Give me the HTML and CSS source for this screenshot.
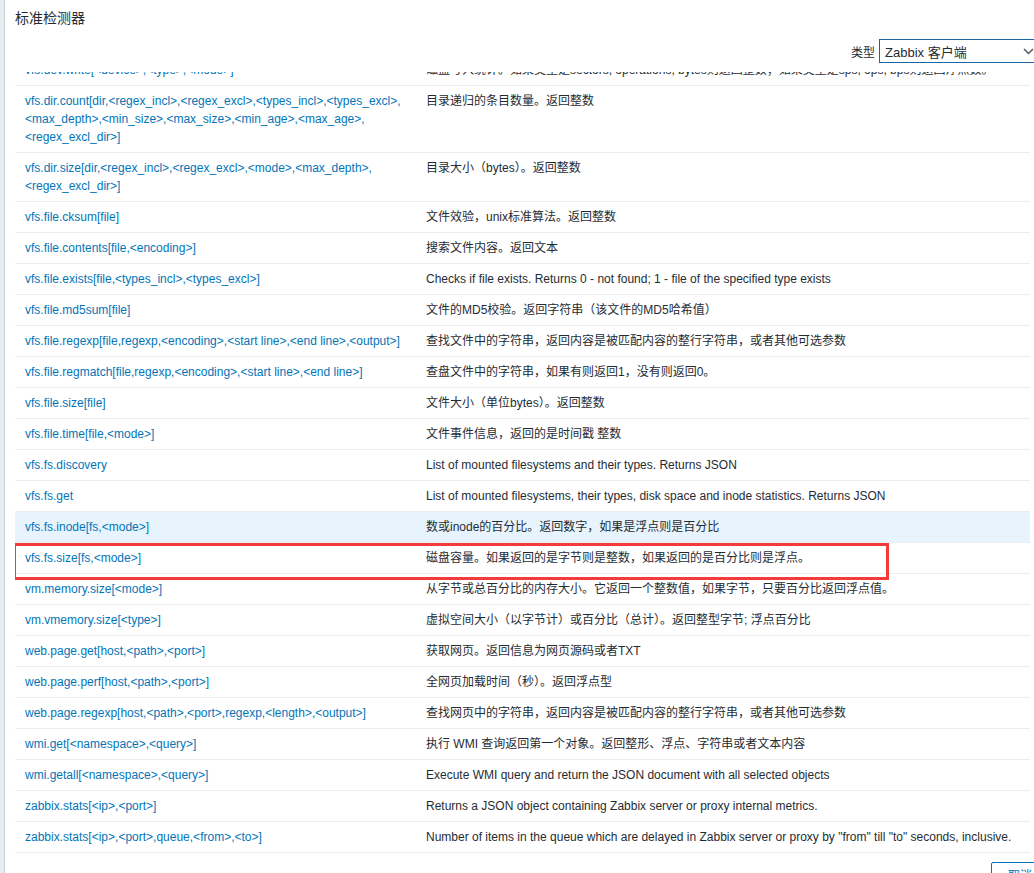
FILE: index.html
```html
<!DOCTYPE html>
<html lang="zh">
<head>
<meta charset="utf-8">
<title>标准检测器</title>
<link rel="stylesheet" href="styles.css">
</head>
<body>
<div class="backdrop-strip"></div>
<div class="dialog">
  <div class="dialog-header"><h4>标准检测器</h4></div>
  <div class="filter-row">
    <span class="filter-label">类型</span>
    <div class="select">
      <span>Zabbix 客户端</span>
      <svg width="11" height="7" viewBox="0 0 11 7"><path d="M1 1l4.5 4.5L10 1" fill="none" stroke="#4f5b63" stroke-width="1.5"/></svg>
    </div>
  </div>
  <div class="table-wrap">
    <table class="items">
      <tbody>
        <tr><td class="key"><a>vfs.dev.write[&lt;device&gt;,&lt;type&gt;,&lt;mode&gt;]</a></td><td>磁盘写入统计。如果类型是sectors, operations, bytes则返回整数；如果类型是sps, ops, bps则返回浮点数。</td></tr>
        <tr><td class="key"><a>vfs.dir.count[dir,<wbr>&lt;regex_incl&gt;,<wbr>&lt;regex_excl&gt;,<wbr>&lt;types_incl&gt;,<wbr>&lt;types_excl&gt;,<wbr>&lt;max_depth&gt;,<wbr>&lt;min_size&gt;,<wbr>&lt;max_size&gt;,<wbr>&lt;min_age&gt;,<wbr>&lt;max_age&gt;,<wbr>&lt;regex_excl_dir&gt;]</a></td><td>目录递归的条目数量。返回整数</td></tr>
        <tr><td class="key"><a>vfs.dir.size[dir,<wbr>&lt;regex_incl&gt;,<wbr>&lt;regex_excl&gt;,<wbr>&lt;mode&gt;,<wbr>&lt;max_depth&gt;,<wbr>&lt;regex_excl_dir&gt;]</a></td><td>目录大小（bytes）。返回整数</td></tr>
        <tr><td class="key"><a>vfs.file.cksum[file]</a></td><td>文件效验，unix标准算法。返回整数</td></tr>
        <tr><td class="key"><a>vfs.file.contents[file,&lt;encoding&gt;]</a></td><td>搜索文件内容。返回文本</td></tr>
        <tr><td class="key"><a>vfs.file.exists[file,&lt;types_incl&gt;,&lt;types_excl&gt;]</a></td><td>Checks if file exists. Returns 0 - not found; 1 - file of the specified type exists</td></tr>
        <tr><td class="key"><a>vfs.file.md5sum[file]</a></td><td>文件的MD5校验。返回字符串（该文件的MD5哈希值）</td></tr>
        <tr><td class="key"><a>vfs.file.regexp[file,regexp,&lt;encoding&gt;,&lt;start line&gt;,&lt;end line&gt;,&lt;output&gt;]</a></td><td>查找文件中的字符串，返回内容是被匹配内容的整行字符串，或者其他可选参数</td></tr>
        <tr><td class="key"><a>vfs.file.regmatch[file,regexp,&lt;encoding&gt;,&lt;start line&gt;,&lt;end line&gt;]</a></td><td>查盘文件中的字符串，如果有则返回1，没有则返回0。</td></tr>
        <tr><td class="key"><a>vfs.file.size[file]</a></td><td>文件大小（单位bytes）。返回整数</td></tr>
        <tr><td class="key"><a>vfs.file.time[file,&lt;mode&gt;]</a></td><td>文件事件信息，返回的是时间戳 整数</td></tr>
        <tr><td class="key"><a>vfs.fs.discovery</a></td><td>List of mounted filesystems and their types. Returns JSON</td></tr>
        <tr><td class="key"><a>vfs.fs.get</a></td><td>List of mounted filesystems, their types, disk space and inode statistics. Returns JSON</td></tr>
        <tr class="hover"><td class="key"><a>vfs.fs.inode[fs,&lt;mode&gt;]</a></td><td>数或inode的百分比。返回数字，如果是浮点则是百分比</td></tr>
        <tr><td class="key"><a>vfs.fs.size[fs,&lt;mode&gt;]</a></td><td>磁盘容量。如果返回的是字节则是整数，如果返回的是百分比则是浮点。</td></tr>
        <tr><td class="key"><a>vm.memory.size[&lt;mode&gt;]</a></td><td>从字节或总百分比的内存大小。它返回一个整数值，如果字节，只要百分比返回浮点值。</td></tr>
        <tr><td class="key"><a>vm.vmemory.size[&lt;type&gt;]</a></td><td>虚拟空间大小（以字节计）或百分比（总计）。返回整型字节; 浮点百分比</td></tr>
        <tr><td class="key"><a>web.page.get[host,&lt;path&gt;,&lt;port&gt;]</a></td><td>获取网页。返回信息为网页源码或者TXT</td></tr>
        <tr><td class="key"><a>web.page.perf[host,&lt;path&gt;,&lt;port&gt;]</a></td><td>全网页加载时间（秒）。返回浮点型</td></tr>
        <tr><td class="key"><a>web.page.regexp[host,&lt;path&gt;,&lt;port&gt;,regexp,&lt;length&gt;,&lt;output&gt;]</a></td><td>查找网页中的字符串，返回内容是被匹配内容的整行字符串，或者其他可选参数</td></tr>
        <tr><td class="key"><a>wmi.get[&lt;namespace&gt;,&lt;query&gt;]</a></td><td>执行 WMI 查询返回第一个对象。返回整形、浮点、字符串或者文本内容</td></tr>
        <tr><td class="key"><a>wmi.getall[&lt;namespace&gt;,&lt;query&gt;]</a></td><td>Execute WMI query and return the JSON document with all selected objects</td></tr>
        <tr><td class="key"><a>zabbix.stats[&lt;ip&gt;,&lt;port&gt;]</a></td><td>Returns a JSON object containing Zabbix server or proxy internal metrics.</td></tr>
        <tr><td class="key"><a>zabbix.stats[&lt;ip&gt;,&lt;port&gt;,queue,&lt;from&gt;,&lt;to&gt;]</a></td><td>Number of items in the queue which are delayed in Zabbix server or proxy by "from" till "to" seconds, inclusive.</td></tr>
      </tbody>
    </table>
    <div class="mark-box"></div>
  </div>
  <div class="dialog-footer">
    <button class="btn-alt">取消</button>
  </div>
</div>
</body>
</html>
```

FILE: styles.css
```css
html, body {
  margin: 0;
  padding: 0;
  height: 873px;
  overflow: hidden;
  background: #ffffff;
}
body {
  display: flex;
  font-family: "Liberation Sans", Arial, "Noto Sans CJK SC", sans-serif;
  font-size: 12px;
  color: #1f2c33;
}
.backdrop-strip {
  flex: 0 0 4px;
  background: #e9ecee;
  border-right: 1px solid #c9d0d4;
}
.dialog {
  flex: 0 0 auto;
  width: 1034px;
  padding: 0 10px;
  background: #ffffff;
}
.dialog-header {
  height: 35px;
  display: flex;
  align-items: center;
}
.dialog-header h4 {
  margin: 0;
  font-size: 14px;
  font-weight: normal;
  color: #1f2c33;
  line-height: 18px;
}
.filter-row {
  margin-top: 4px;
  display: flex;
  justify-content: flex-end;
  align-items: center;
  padding-right: 8px;
  height: 24px;
}
.filter-label {
  margin-right: 4px;
  font-size: 12px;
  color: #1f2c33;
}
.select {
  box-sizing: border-box;
  width: 162px;
  height: 24px;
  border: 1px solid #1a64a3;
  padding: 0 6px 0 5px;
  display: flex;
  align-items: center;
  justify-content: space-between;
  font-size: 13px;
  color: #1f2c33;
}
.table-wrap {
  position: relative;
  margin-top: 9px;
  width: 1015px;
  height: 781px;
  overflow: hidden;
}
.items {
  width: 100%;
  border-collapse: collapse;
  margin-top: -17px;
  table-layout: fixed;
}
.items td {
  padding: 6px 10px;
  line-height: 18px;
  border-bottom: 1px solid #ebeef0;
  vertical-align: top;
  color: #1f2c33;
  white-space: nowrap;
}
.items td.key {
  width: 381px;
  white-space: normal;
}
.items a {
  color: #0275b8;
  text-decoration: none;
}
.items tr.hover td {
  background: #e8f4fd;
}
.mark-box {
  position: absolute;
  left: -2px;
  top: 471px;
  width: 870px;
  height: 31px;
  border: 3px solid #f43a3a;
  pointer-events: none;
}
.dialog-footer {
  padding-top: 9px;
  display: flex;
  justify-content: flex-end;
}
.btn-alt {
  box-sizing: border-box;
  height: 24px;
  min-width: 58px;
  padding: 0 12px;
  border: 1px solid #0275b8;
  background: #ffffff;
  color: #0275b8;
  font-family: "Liberation Sans", Arial, "Noto Sans CJK SC", sans-serif;
  font-size: 12px;
  border-radius: 2px;
}
```
